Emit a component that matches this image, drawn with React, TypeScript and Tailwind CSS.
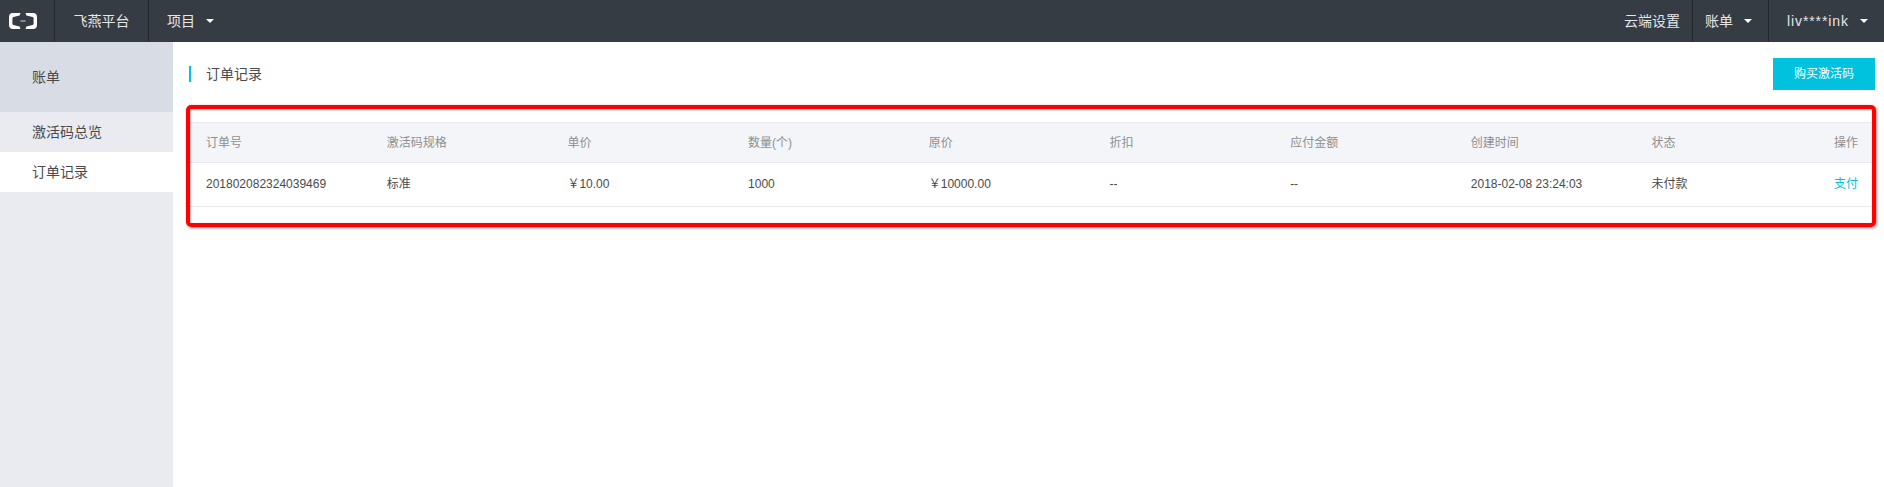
import React from 'react';

const columns = ['订单号', '激活码规格', '单价', '数量(个)', '原价', '折扣', '应付金额', '创建时间', '状态'];
const row = ['201802082324039469', '标准', '￥10.00', '1000', '￥10000.00', '--', '--', '2018-02-08 23:24:03', '未付款'];

const Caret = () => (
  <span className="ml-[11px] inline-block h-0 w-0 border-x-[4px] border-t-[4px] border-x-transparent border-t-white" />
);

const Logo = () => (
  <svg width="28" height="16" viewBox="0 0 28 16" fill="#fff">
    <path d="M4 0h7.500L10.600 2.600 4.400 4Q3.400 4.300 3.400 5.400v5.200Q3.400 11.700 4.400 12l6.200 1.400L11.500 16H4Q0 16 0 12V4Q0 0 4 0z" />
    <path d="M24 0h-7.500L17.400 2.600 23.600 4Q24.600 4.300 24.600 5.400v5.200Q24.600 11.700 23.600 12l-6.200 1.400L16.500 16H24Q28 16 28 12V4Q28 0 24 0z" />
    <rect x="11.500" y="7.600" width="5" height="0.800" />
  </svg>
);

export default function App() {
  return (
    <div className="bg-white font-['Liberation_Sans','Noto_Sans_CJK_SC',sans-serif] text-[#4a4a4a]">
      {/* Top nav */}
      <header className="flex h-[42px] items-center justify-between bg-[#363c43] text-[14px] text-[#e4e6e8]">
        <div className="flex h-full items-center">
          <div className="flex h-full w-[55px] items-center border-r border-[#23282c] pl-[9px]">
            <Logo />
          </div>
          <div className="flex h-full w-[94px] items-center justify-center border-r border-[#23282c]">飞燕平台</div>
          <div className="flex h-full items-center pl-[18px]">
            项目
            <Caret />
          </div>
        </div>
        <div className="flex h-full items-center">
          <div className="flex h-full items-center border-r border-[#23282c] pr-[12px]">云端设置</div>
          <div className="flex h-full w-[76px] items-center border-r border-[#23282c] pl-[12px]">
            账单
            <Caret />
          </div>
          <div className="flex h-full w-[115px] items-center pl-[18px] tracking-[0.9px]">
            liv****ink
            <Caret />
          </div>
        </div>
      </header>

      <div className="flex h-[445px]">
        {/* Sidebar */}
        <aside className="w-[173px] shrink-0 bg-[#e9ebf0] text-[14px]">
          <div className="flex h-[70px] items-center bg-[#d8dce5] pl-[32px]">账单</div>
          <div className="flex h-[40px] items-center pl-[32px]">激活码总览</div>
          <div className="flex h-[40px] items-center bg-white pl-[32px]">订单记录</div>
        </aside>

        {/* Content */}
        <main className="min-w-0 flex-1 pl-[16px] pr-[9px] pt-[16px]">
          <div className="flex h-[32px] items-center justify-between">
            <div className="flex h-[16px] items-center border-l-2 border-[#00c1de] pl-[15px] text-[14px]">订单记录</div>
            <button className="h-[32px] w-[102px] bg-[#00c1de] text-[12px] text-white">购买激活码</button>
          </div>

          <div className="relative mt-[32px] text-[12px]">
            <div className="flex h-[41px] items-center border-y border-[#e7e9ee] bg-[#f3f5f9] pl-[17px] text-[#8f8f8f]">
              {columns.map((c) => (
                <div key={c} className="w-[180.7px] shrink-0">
                  {c}
                </div>
              ))}
              <div className="ml-auto shrink-0 whitespace-nowrap pr-[17px]">操作</div>
            </div>
            <div className="flex h-[44px] items-center border-b border-[#e7e9ee] pb-[2px] pl-[17px]">
              {row.map((c, i) => (
                <div key={i} className="w-[180.7px] shrink-0">
                  {c}
                </div>
              ))}
              <div className="ml-auto shrink-0 whitespace-nowrap pr-[17px] text-[#00c1de]">支付</div>
            </div>

            {/* Red annotation round the table */}
            <div className="pointer-events-none absolute bottom-[-20px] left-[-3px] right-[-1px] top-[-17px] rounded-[5px] border-4 border-[#ff0000] shadow-[1px_1px_3px_rgba(0,0,0,0.45),inset_1px_1px_2px_rgba(0,0,0,0.3)]" />
          </div>
        </main>
      </div>
    </div>
  );
}
